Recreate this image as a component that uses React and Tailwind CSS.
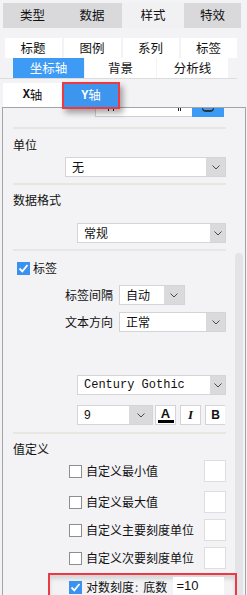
import React from "react";

const font = "font-['Noto_Sans_CJK_SC','Noto_Sans',sans-serif]";

function Chevron() {
  return (
    <svg width="8" height="5" viewBox="0 0 8 5" className="block">
      <polyline points="0.5,0.5 4,4 7.5,0.5" fill="none" stroke="#4a4a4a" strokeWidth="1" />
    </svg>
  );
}

function Select({ value, className, arrowClass, textClass = "" }) {
  return (
    <div className={`flex h-[20px] bg-white border border-[#d4d4d6] ${className}`}>
      <div className={`flex-1 pl-[6px] flex items-center text-[12px] leading-none text-[#111] ${textClass}`}>
        {value}
      </div>
      <div className={`h-full bg-[#dadadd] flex items-center justify-center ${arrowClass}`}>
        <Chevron />
      </div>
    </div>
  );
}

function Check({ checked }) {
  if (checked) {
    return (
      <div className="w-[13px] h-[13px] bg-[#3a91ef] flex items-center justify-center shrink-0">
        <svg width="11" height="11" viewBox="0 0 11 11">
          <polyline points="1.5,5.5 4.3,8.3 9.5,2" fill="none" stroke="#fff" strokeWidth="1.8" />
        </svg>
      </div>
    );
  }
  return <div className="w-[13px] h-[13px] bg-white border border-[#8e8e8e] shrink-0" />;
}

function Sep({ className = "" }) {
  return <div className={`ml-[10px] w-[213px] h-[2px] bg-[#e8e6e0] ${className}`} />;
}

function OptRow({ label, className = "" }) {
  return (
    <div className={`flex items-center h-[22px] ${className}`}>
      <div className="ml-[66px]">
        <Check />
      </div>
      <span className="ml-[4px] text-[12px] leading-none text-[#111]">{label}</span>
      <div className="ml-auto mr-[9px] w-[22px] h-[22px] bg-white border border-[#dedee0]" />
    </div>
  );
}

export default function App() {
  const topTabs = [
    { t: "类型", w: "w-[59px]" },
    { t: "数据", w: "w-[60px]" },
    { t: "样式", w: "w-[62px]", on: true },
    { t: "特效", w: "w-[57px]" },
  ];
  const row1 = [
    { t: "标题", w: "w-[57px]" },
    { t: "图例", w: "w-[57px]" },
    { t: "系列", w: "w-[56px]" },
    { t: "标签", w: "w-[56px]" },
  ];
  const row2 = [
    { t: "坐标轴", on: true },
    { t: "背景" },
    { t: "分析线" },
  ];

  return (
    <div className={`w-[247px] h-[595px] overflow-hidden bg-[#f3f3f5] pt-[3px] ${font} text-[#111]`}>
      {/* main tabs */}
      <div className="ml-[3px] w-[238px] h-[25px] flex bg-[#d9d9dc]">
        {topTabs.map((x) => (
          <div
            key={x.t}
            className={`${x.w} h-full flex items-center justify-center text-[12.5px] ${x.on ? "bg-[#f1f1f3]" : ""}`}
          >
            {x.t}
          </div>
        ))}
      </div>

      {/* sub tabs */}
      <div className="mt-[10px] w-[237px] border-b border-[#dcdcde]">
        <div className="w-[241px] flex justify-center gap-[2px]">
          {row1.map((x) => (
            <div key={x.t} className={`${x.w} h-[20px] bg-white flex items-center justify-center text-[12.5px]`}>
              {x.t}
            </div>
          ))}
        </div>
        <div className="w-[241px] flex justify-center gap-[1px]">
          {row2.map((x) => (
            <div
              key={x.t}
              className={`w-[71px] h-[20px] flex items-center justify-center text-[12.5px] ${
                x.on ? "bg-[#3d9af5] text-white" : "bg-white"
              }`}
            >
              {x.t}
            </div>
          ))}
        </div>
      </div>

      {/* axis tabs */}
      <div className="mt-[4px] ml-[3px] flex items-start h-[24px]">
        <div className="w-[59px] h-[24px] bg-white flex items-center justify-center text-[12.5px]">
          <span className="font-['Liberation_Mono',monospace] font-bold text-[12px]">X</span>轴
        </div>
        <div className="relative z-10 -mt-[1px] w-[58px] h-[27px] border-2 border-[#ec3a44] bg-[#3d95ee] text-white flex items-center justify-center text-[12.5px] shadow-[3px_4px_6px_rgba(0,0,0,0.35)]">
          <span className="font-['Liberation_Mono',monospace] font-bold text-[12px]">Y</span>轴
        </div>
      </div>

      {/* settings panel */}
      <div className="ml-[2px] w-[244px] h-[500px] border-l border-r border-t border-[#a4a4a6] flex">
        <div className="w-[232px] shrink-0">
          {/* partially scrolled control */}
          <div className="flex h-[9px] ml-[92px]">
            <div className="w-[97px] h-full bg-white border-l border-b border-[#cfcfd2] relative">
              <div className="absolute left-[12px] top-0 w-[6px] h-[3px] border-l border-r border-[#222]" />
              <div className="absolute left-[82px] top-0 w-[3px] h-[3px] border-l border-r border-[#222]" />
            </div>
            <div className="w-[32px] h-full bg-[#3d9af5] flex justify-center">
              <div className="w-[12px] h-[4px] border-b-2 border-l border-r border-[#333] rounded-b-full" />
            </div>
          </div>

          <Sep className="mt-[10px]" />
          <div className="mt-[8px] pl-[10px] text-[12px] leading-[16px]">单位</div>
          <Select value="无" className="mt-[4px] ml-[62px] w-[161px]" arrowClass="w-[19px]" />
          <Sep className="mt-[6px]" />
          <div className="mt-[7px] pl-[10px] text-[12px] leading-[16px]">数据格式</div>
          <Select value="常规" className="mt-[15px] ml-[74px] w-[149px]" arrowClass="w-[15px]" />
          <Sep className="mt-[6px]" />

          <div className="mt-[9px] ml-[14px] flex items-center h-[16px]">
            <Check checked />
            <span className="ml-[3px] text-[12px] leading-none">标签</span>
          </div>

          <div className="mt-[9px] flex items-center h-[20px]">
            <div className="w-[110px] text-right text-[12px] leading-none">标签间隔</div>
            <Select value="自动" className="ml-[6px] w-[66px]" arrowClass="w-[20px]" />
          </div>
          <div className="mt-[7px] flex items-center h-[20px]">
            <div className="w-[110px] text-right text-[12px] leading-none">文本方向</div>
            <Select value="正常" className="ml-[6px] w-[107px]" arrowClass="w-[19px]" />
          </div>

          <Select
            value="Century Gothic"
            className="mt-[43px] ml-[74px] w-[149px]"
            arrowClass="w-[15px]"
            textClass="font-['Liberation_Mono',monospace] text-[10px] text-[#1a1a40]"
          />

          <div className="mt-[10px] ml-[74px] flex items-center h-[20px]">
            <Select value="9" className="w-[76px]" arrowClass="w-[23px]" textClass="font-['Liberation_Sans',sans-serif]" />
            <div className="ml-[2px] w-[21px] h-[20px] bg-white border border-[#d4d4d6] flex flex-col items-center justify-center">
              <span className="font-['Liberation_Sans',sans-serif] font-bold text-[13px] leading-[11px]">A</span>
              <div className="mt-[1px] w-[16px] h-[3px] bg-black" />
            </div>
            <div className="ml-[4px] w-[21px] h-[20px] bg-white border border-[#d4d4d6] flex items-center justify-center font-['Liberation_Serif',serif] italic font-bold text-[13px]">
              I
            </div>
            <div className="ml-[4px] w-[20px] h-[20px] bg-white border-l border-t border-b border-[#d4d4d6] flex items-center justify-center font-['Liberation_Sans',sans-serif] font-bold text-[12px]">
              B
            </div>
          </div>

          <Sep className="mt-[7px]" />
          <div className="mt-[7px] pl-[10px] text-[12px] leading-[16px]">值定义</div>

          <OptRow label="自定义最小值" className="mt-[3px]" />
          <OptRow label="自定义最大值" className="mt-[9px]" />
          <OptRow label="自定义主要刻度单位" className="mt-[6px]" />
          <OptRow label="自定义次要刻度单位" className="mt-[6px]" />

          <div className="relative z-10 mt-[4px] ml-[45px] -mr-[2px] h-[28px] border-2 border-[#ec3a44] shadow-[inset_0_4px_4px_rgba(0,0,0,0.12)] flex items-start pt-[2px]">
            <div className="ml-[19px] mt-[4px]">
              <Check checked />
            </div>
            <span className="ml-[4px] mt-[3px] text-[12px] leading-[14px]">对数刻度</span>
            <span className="ml-[1px] mt-[3px] text-[12px] leading-[14px] text-[#555]">:</span>
            <span className="ml-[5px] mt-[3px] text-[12px] leading-[14px]">底数</span>
            <div className="ml-[6px] w-[51px] h-[24px] bg-white flex items-start pl-[3px] pt-[1px] font-['Liberation_Sans',sans-serif] text-[13px] leading-[16px]">
              =10
            </div>
          </div>
        </div>

        <div className="w-[8px] shrink-0 mt-[145px] bg-[#e4e4e6] rounded-t-[4px]" />
      </div>
    </div>
  );
}
